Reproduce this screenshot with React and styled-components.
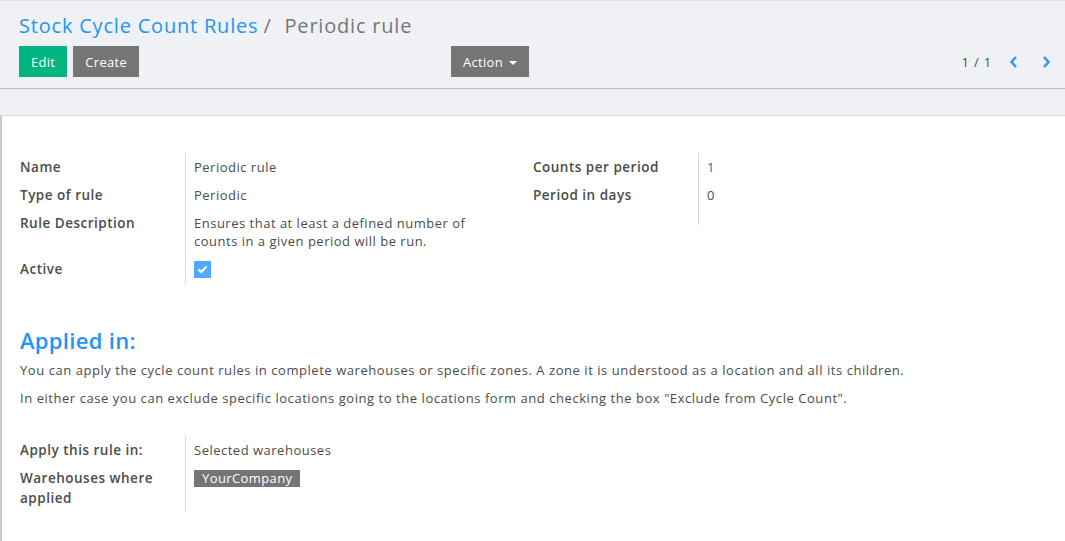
import styled, { createGlobalStyle } from 'styled-components';

const GlobalStyle = createGlobalStyle`
  html, body {
    margin: 0;
    padding: 0;
    background: #f0f1f5;
  }
  body {
    font-family: "Open Sans", "Liberation Sans", sans-serif;
    color: #4c4c4c;
  }
`;

const Page = styled.div`
  width: 1065px;
  height: 541px;
  overflow: hidden;
  background: #f0f1f5;
  border-top: 1px solid #e2e2e6;
  box-sizing: border-box;
`;

const ControlPanel = styled.div`
  padding: 11px 19px 0 19px;
  height: 88px;
  box-sizing: border-box;
  border-bottom: 1px solid #b9bbc9;
`;

const Breadcrumb = styled.div`
  font-size: 20px;
  letter-spacing: 0.8px;
  line-height: 28px;
  display: flex;
  align-items: baseline;
  gap: 8px;
`;

const Crumb = styled.span`
  color: ${p => (p.active ? '#777' : '#2196f3')};
`;

const Slash = styled.span`
  color: #777;
  margin-left: -3px;
  margin-right: 5px;
`;

const ButtonRow = styled.div`
  margin-top: 6px;
  display: flex;
  align-items: center;
`;

const Left = styled.div`
  display: flex;
  gap: 6px;
  width: 432px;
`;

const Btn = styled.button`
  height: 31px;
  padding: 0 12px;
  border: none;
  border-radius: 0;
  font-family: inherit;
  font-size: 13px;
  letter-spacing: 0.3px;
  color: #fff;
  background: ${p => (p.primary ? '#00b57f' : '#757575')};
  display: flex;
  align-items: center;
  gap: 6px;
`;

const Caret = styled.span`
  width: 0;
  height: 0;
  border-left: 4px solid transparent;
  border-right: 4px solid transparent;
  border-top: 4px solid #fff;
  margin-top: 2px;
`;

const Pager = styled.div`
  margin-left: auto;
  display: flex;
  align-items: center;
  font-size: 13px;
  letter-spacing: 0.8px;
  color: #4c4c4c;
  gap: 12px;
  margin-right: -6px;
`;

const PagerValue = styled.span`
  margin-right: -4px;
`;

const Arrow = styled.svg`
  width: 12px;
  height: 14px;
  margin-left: 8px;
`;

const Gap = styled.div`
  height: 27px;
  border-bottom: 1px solid #d9d7df;
  box-sizing: border-box;
`;

const Sheet = styled.div`
  background: #fff;
  border-left: 2px solid #c9c9d1;
  height: 430px;
  padding: 37px 0 0 18px;
  box-sizing: border-box;
`;

const Groups = styled.div`
  display: flex;
`;

const Group = styled.div`
  display: grid;
  grid-template-columns: ${p => p.labelWidth}px ${p => p.valueWidth}px;
  align-content: start;
`;

const Label = styled.div`
  font-weight: 600;
  font-size: 13.5px;
  letter-spacing: 0.5px;
  line-height: 20px;
  padding: 4px 0;
  min-height: ${p => (p.spacer ? '16px' : 'auto')};
  box-sizing: border-box;
  border-right: 1px solid #d6d6d6;
  color: #4c4c4c;
`;

const Value = styled.div`
  font-size: 13px;
  letter-spacing: 0.5px;
  line-height: 18px;
  padding: 5px 0 5px 8px;
  color: ${p => (p.num ? '#3b5bb5' : '#4c4c4c')};
`;

const Check = styled.span`
  display: inline-flex;
  align-items: center;
  justify-content: center;
  width: 17px;
  height: 17px;
  background: #50a9ff;
  margin-top: 1px;
`;

const Title = styled.h2`
  margin: 43px 0 0 0;
  font-size: 22px;
  letter-spacing: 0.3px;
  font-weight: 600;
  line-height: 28px;
  color: #1f93ff;
`;

const Para = styled.p`
  margin: 4px 0 0 0;
  font-size: 13px;
  letter-spacing: 0.55px;
  line-height: 24px;
  color: #4c4c4c;
  & + & {
    margin-top: 4px;
  }
`;

const Section = styled.div`
  margin-top: 26px;
`;

const Tag = styled.span`
  display: inline-block;
  background: #757575;
  color: #fff;
  font-size: 13px;
  letter-spacing: 0.4px;
  line-height: 17px;
  padding: 0 8px;
`;

function App() {
  return (
    <>
      <GlobalStyle />
      <Page>
        <ControlPanel>
          <Breadcrumb>
            <Crumb>Stock Cycle Count Rules</Crumb>
            <Slash>/</Slash>
            <Crumb active>Periodic rule</Crumb>
          </Breadcrumb>
          <ButtonRow>
            <Left>
              <Btn primary>Edit</Btn>
              <Btn>Create</Btn>
            </Left>
            <Btn>
              Action <Caret />
            </Btn>
            <Pager>
              <PagerValue>1 / 1</PagerValue>
              <Arrow viewBox="0 0 12 14">
                <path d="M8 2 L3.5 7 L8 12" stroke="#2e9bf0" strokeWidth="2.6" fill="none" />
              </Arrow>
              <Arrow viewBox="0 0 12 14">
                <path d="M4 2 L8.5 7 L4 12" stroke="#2e9bf0" strokeWidth="2.6" fill="none" />
              </Arrow>
            </Pager>
          </ButtonRow>
        </ControlPanel>
        <Gap />
        <Sheet>
          <Groups>
            <Group labelWidth={166} valueWidth={347}>
              <Label>Name</Label>
              <Value>Periodic rule</Value>
              <Label>Type of rule</Label>
              <Value>Periodic</Value>
              <Label>Rule Description</Label>
              <Value>
                Ensures that at least a defined number of
                <br />
                counts in a given period will be run.
              </Value>
              <Label>Active</Label>
              <Value>
                <Check>
                  <svg width="11" height="9" viewBox="0 0 11 9">
                    <path d="M1.5 4.5 L4.2 7 L9.5 1.5" stroke="#fff" strokeWidth="2.2" fill="none" />
                  </svg>
                </Check>
              </Value>
            </Group>
            <Group labelWidth={166} valueWidth={200}>
              <Label>Counts per period</Label>
              <Value num>1</Value>
              <Label>Period in days</Label>
              <Value>0</Value>
              <Label spacer />
              <div />
            </Group>
          </Groups>
          <Title>Applied in:</Title>
          <Para>
            You can apply the cycle count rules in complete warehouses or specific zones. A zone it is understood as a location and all its children.
          </Para>
          <Para>
            In either case you can exclude specific locations going to the locations form and checking the box "Exclude from Cycle Count".
          </Para>
          <Section>
            <Group labelWidth={166} valueWidth={347}>
              <Label>Apply this rule in:</Label>
              <Value>Selected warehouses</Value>
              <Label>
                Warehouses where
                <br />
                applied
              </Label>
              <Value>
                <Tag>YourCompany</Tag>
              </Value>
            </Group>
          </Section>
        </Sheet>
      </Page>
    </>
  );
}

export default App;
